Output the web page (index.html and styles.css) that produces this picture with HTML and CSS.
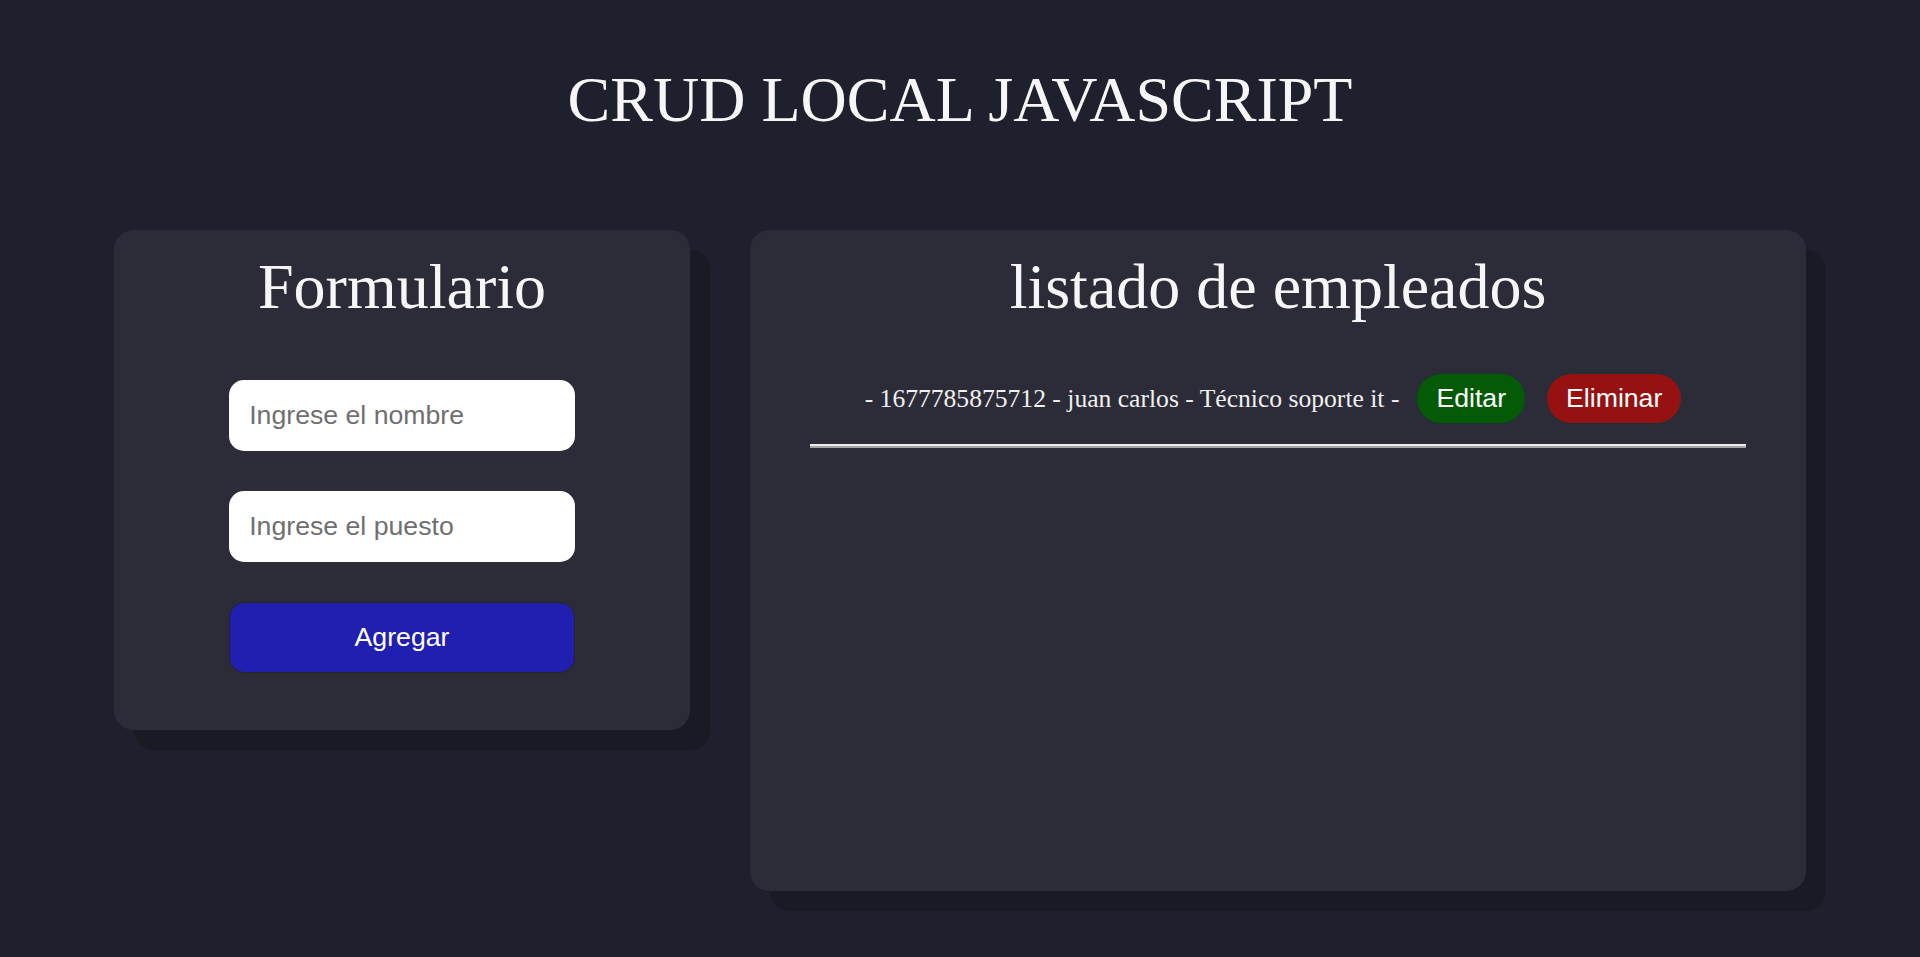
FILE: index.html
```html
<!DOCTYPE html>
<html lang="es">
<head>
<meta charset="utf-8">
<title>CRUD LOCAL JAVASCRIPT</title>
<link rel="stylesheet" href="styles.css">
</head>
<body>
  <h1 class="title">CRUD LOCAL JAVASCRIPT</h1>
  <main class="layout">
    <section class="card card-form">
      <h2 class="card-title">Formulario</h2>
      <form class="form">
        <input class="field" type="text" placeholder="Ingrese el nombre">
        <input class="field" type="text" placeholder="Ingrese el puesto">
        <button class="btn-add" type="button">Agregar</button>
      </form>
    </section>
    <section class="card card-list">
      <h2 class="card-title">listado de empleados</h2>
      <ul class="list">
        <li class="item">
          <span class="item-text">- 1677785875712 - juan carlos - Técnico soporte it -</span>
          <button class="btn btn-edit" type="button">Editar</button>
          <button class="btn btn-delete" type="button">Eliminar</button>
        </li>
      </ul>
      <div class="divider"></div>
    </section>
  </main>
</body>
</html>
```

FILE: styles.css
```css
html, body {
  margin: 0;
  padding: 0;
}

body {
  background: #1f202e;
  color: #f4f4f4;
  font-family: "Liberation Serif", "Times New Roman", serif;
  min-height: 957px;
}

.title {
  margin: 0;
  padding-top: 63px;
  font-size: 64px;
  font-weight: normal;
  line-height: 1.15;
  text-align: center;
  color: #f6f6f6;
}

.layout {
  display: flex;
  justify-content: center;
  align-items: flex-start;
  gap: 60px;
  margin-top: 93px;
}

.card {
  box-sizing: border-box;
  background: #2c2c39;
  border-radius: 20px;
  box-shadow: 20px 20px 0 #1a1a24;
  padding-top: 20px;
}

.card-form {
  width: 576px;
  height: 500px;
}

.card-list {
  width: 1056px;
  height: 661px;
}

.card-title {
  margin: 0;
  font-size: 64px;
  font-weight: normal;
  line-height: 1.15;
  text-align: center;
  color: #f6f6f6;
}

.form {
  display: flex;
  flex-direction: column;
  align-items: center;
  gap: 40px;
  margin: 57px 0 0;
}

.field,
.btn-add {
  box-sizing: border-box;
  width: 60%;
  font-family: "Liberation Sans", Arial, sans-serif;
  font-size: 26.67px;
  line-height: normal;
  border-radius: 15px;
  margin: 0;
}

.field {
  padding: 20px;
  border: none;
  background: #ffffff;
  color: #222;
  outline: none;
}

.field::placeholder {
  color: #6f6f6f;
}

.btn-add {
  padding: 19px;
  border: 1px solid #26261e;
  background: #211fb0;
  color: #ffffff;
  cursor: pointer;
}

.list {
  list-style: none;
  margin: 50px 0 0;
  padding: 0;
}

.item {
  display: flex;
  justify-content: center;
  align-items: center;
  padding-right: 9px;
}

.item-text {
  font-size: 25.6px;
  line-height: 1.15;
  color: #f0f0f0;
  white-space: nowrap;
}

.btn {
  font-family: "Liberation Sans", Arial, sans-serif;
  font-size: 26.67px;
  line-height: normal;
  padding: 9px 19px;
  border: 1px solid #1d3236;
  border-radius: 26px;
  color: #ffffff;
  cursor: pointer;
  margin: 0;
}

.btn-edit {
  background: #055a05;
  margin-left: 17px;
}

.btn-delete {
  background: #961212;
  margin-left: 20px;
}

.divider {
  margin: 20px 60px 0;
  height: 0;
  border-top: 2px solid #ededed;
  border-bottom: 2px solid #a5a5a5;
}
```
